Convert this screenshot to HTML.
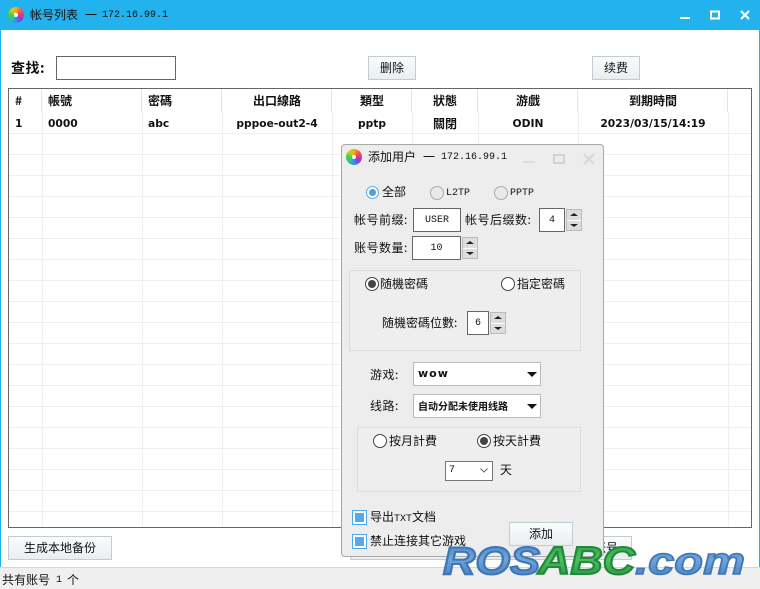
<!DOCTYPE html>
<html><head><meta charset="utf-8"><style>
*{box-sizing:border-box}
html,body{margin:0;padding:0}
body{width:760px;height:589px;position:relative;overflow:hidden;background:#fff;font-family:"Liberation Serif","Noto Sans CJK SC",sans-serif;font-size:12px;color:#111}
.a{position:absolute;white-space:nowrap}
.z{font-family:"WenQuanYi Zen Hei","Noto Sans CJK SC",sans-serif}
.b{font-family:"DejaVu Sans","WenQuanYi Zen Hei","Noto Sans CJK SC",sans-serif;font-weight:bold;font-size:10.700px;color:#111;text-align:center}
.h{font-family:"WenQuanYi Zen Hei","Noto Sans CJK SC",sans-serif;font-weight:bold;font-size:12px;color:#111;text-align:center}
.m{font-family:"Liberation Mono","WenQuanYi Zen Hei",monospace;font-size:10px}
.btn{position:absolute;border:1px solid #c3ccd5;background:linear-gradient(#fbfcfc,#e9eef1);text-align:center;font-family:"WenQuanYi Zen Hei","Noto Sans CJK SC",sans-serif;font-size:12px;color:#111}
.inp{position:absolute;border:1px solid #666;background:#fff;text-align:center;font-family:"Liberation Mono",monospace;font-size:10px;padding-top:1px}
.sp{position:absolute;width:16px;background:#ddd;border:1px solid #bbb}
.sp:before,.sp:after{content:"";position:absolute;left:3px;border-left:4px solid transparent;border-right:4px solid transparent}
.sp:before{top:3px;border-bottom:3px solid #222}
.sp:after{bottom:3px;border-top:3px solid #222}
.sp i{position:absolute;left:0;right:0;top:50%;height:1px;background:#fff}
.r{position:absolute;width:14px;height:14px;border-radius:50%;border:1px solid #444;background:#fff}
.r.on:after{content:"";position:absolute;left:2px;top:2px;width:8px;height:8px;border-radius:50%;background:#444}
.r.g{border:1px solid #aaa;background:#e9e9e9}
.grp{position:absolute;border:1px solid #dcdcdc;background:#eeeeee}
.sel{position:absolute;border:1px solid #bbb;background:#fff}
.sel:after{content:"";position:absolute;right:3px;top:9px;border-left:5px solid transparent;border-right:5px solid transparent;border-top:5px solid #111}
.cb{position:absolute;width:15px;height:15px;border:1px solid #4aa8ee;background:#fff}
.cb:after{content:"";position:absolute;left:2px;top:2px;width:9px;height:9px;background:#5aa9e6}
.ic{position:absolute;width:16px;height:16px;border-radius:50%;background:conic-gradient(#f0b020,#f06030,#e030a0,#8040e0,#3090f0,#30c0a0,#40d040,#c0d020,#f0b020)}
.ic:after{content:"";position:absolute;left:6px;top:6px;width:4px;height:4px;border-radius:50%;background:#fff}
</style></head><body>

<!-- window frame -->
<div class="a" style="left:0;top:0;width:760px;height:30px;background:#22b2ee"></div>
<div class="a" style="left:0;top:30px;width:1px;height:538px;background:#22b2ee"></div>
<div class="a" style="right:0;top:30px;width:1px;height:538px;background:#22b2ee"></div>
<div class="ic" style="left:8px;top:7px"></div>
<div class="a z" style="left:30px;top:7px;font-size:12px;line-height:16px;color:#111">帐号列表</div>
<div class="a z" style="left:85px;top:7px;font-size:12px;line-height:16px;color:#111">一</div>
<div class="a m" style="left:102px;top:8px;line-height:16px;color:#111">172.16.99.1</div>
<svg class="a" style="left:670px;top:0" width="90" height="30">
<rect x="10" y="17" width="10" height="2" fill="#fff"/>
<rect x="41" y="11.500" width="8" height="7" fill="none" stroke="#fff" stroke-width="2"/>
<path d="M71 11L79 19M79 11L71 19" stroke="#fff" stroke-width="2" fill="none"/>
</svg>

<!-- toolbar -->
<div class="a z" style="left:11px;top:60px;font-size:14px;font-weight:bold;line-height:16px;letter-spacing:.5px">查找:</div>
<div class="a" style="left:56px;top:56px;width:120px;height:24px;border:1px solid #666;background:#fff"></div>
<div class="btn" style="left:368px;top:56px;width:48px;height:24px;line-height:22px">删除</div>
<div class="btn" style="left:592px;top:56px;width:48px;height:24px;line-height:22px">续费</div>

<!-- grid -->
<div class="a" style="left:8px;top:88px;width:744px;height:440px;border:1px solid #666;background:#fff;overflow:hidden">
<svg style="position:absolute;left:-9px;top:-89px;width:760px;height:589px" width="760" height="589" viewBox="0 0 760 589">
<g stroke="#efefef" stroke-width="1" shape-rendering="crispEdges">
<path d="M8 133.500H752M8 154.500H752M8 175.500H752M8 196.500H752M8 217.500H752M8 238.500H752M8 259.500H752M8 280.500H752M8 301.500H752M8 322.500H752M8 343.500H752M8 364.500H752M8 385.500H752M8 406.500H752M8 427.500H752M8 448.500H752M8 469.500H752M8 490.500H752M8 511.500H752"/>
<path d="M42.500 112V527M142.500 112V527M222.500 112V527M332.500 112V527M412.500 112V527M478.500 112V527M578.500 112V527M728.500 112V527"/>
<path stroke="#e4e4e4" d="M41.500 89V112M141.500 89V112M221.500 89V112M331.500 89V112M411.500 89V112M477.500 89V112M577.500 89V112M727.500 89V112"/>
</g></svg>
</div>
<div class="a h" style="left:15px;top:93px;line-height:16px">#</div>
<div class="a h" style="left:48px;top:93px;line-height:16px">帳號</div>
<div class="a h" style="left:148px;top:93px;line-height:16px">密碼</div>
<div class="a h" style="left:222px;width:110px;top:93px;line-height:16px">出口線路</div>
<div class="a h" style="left:332px;width:80px;top:93px;line-height:16px">類型</div>
<div class="a h" style="left:412px;width:66px;top:93px;line-height:16px">狀態</div>
<div class="a h" style="left:478px;width:100px;top:93px;line-height:16px">游戲</div>
<div class="a h" style="left:578px;width:150px;top:93px;line-height:16px">到期時間</div>
<div class="a b" style="left:15px;top:116px;line-height:16px">1</div>
<div class="a b" style="left:48px;top:116px;line-height:16px">0000</div>
<div class="a b" style="left:148px;top:116px;line-height:16px">abc</div>
<div class="a b" style="left:222px;width:110px;top:116px;line-height:16px">pppoe-out2-4</div>
<div class="a b" style="left:332px;width:80px;top:116px;line-height:16px">pptp</div>
<div class="a h" style="left:412px;width:66px;top:116px;line-height:16px">關閉</div>
<div class="a b" style="left:478px;width:100px;top:116px;line-height:16px">ODIN</div>
<div class="a b" style="left:578px;width:150px;top:116px;line-height:16px">2023/03/15/14:19</div>

<!-- bottom -->
<div class="btn" style="left:8px;top:536px;width:104px;height:24px;line-height:22px">生成本地备份</div>
<div class="btn" style="left:350px;top:536px;width:282px;height:24px;line-height:22px;text-align:right;padding-right:13px">账号</div>
<div class="a" style="left:0;top:567px;width:760px;height:22px;background:#efefef;border-top:1px solid #d6d6d6"></div>
<div class="a z" style="left:2px;top:572px;line-height:15px;font-size:12px">共有账号</div>
<div class="a m" style="left:56px;top:573px;line-height:15px">1</div>
<div class="a z" style="left:67px;top:572px;line-height:15px;font-size:12px">个</div>

<!-- dialog -->
<div class="a" style="left:341px;top:144px;width:263px;height:413px;background:#ededed;border:1px solid #a8a8a8;border-radius:4px"></div>
<div class="ic" style="left:346px;top:149px"></div>
<div class="a z" style="left:368px;top:149px;line-height:16px;font-size:12px">添加用户</div>
<div class="a z" style="left:423px;top:149px;line-height:16px;font-size:12px">一</div>
<div class="a m" style="left:441px;top:150px;line-height:16px">172.16.99.1</div>
<svg class="a" style="left:520px;top:150px" width="80" height="18">
<rect x="3" y="11" width="12" height="2" fill="#dcdcdc"/>
<rect x="34" y="5" width="10" height="8" fill="none" stroke="#d2d2d2" stroke-width="2"/>
<path d="M64 4L74 14M74 4L64 14" stroke="#d8d8d8" stroke-width="2" fill="none"/>
</svg>

<div class="a" style="left:366px;top:186px;width:13px;height:13px;border-radius:50%;border:1px solid #5aa9e6;background:#fff"><div style="position:absolute;left:2px;top:2px;width:7px;height:7px;border-radius:50%;background:#4a9fe6"></div></div>
<div class="a z" style="left:382px;top:184px;line-height:15px">全部</div>
<div class="r g" style="left:430px;top:186px"></div>
<div class="a m" style="left:446px;top:187px;line-height:13px">L2TP</div>
<div class="r g" style="left:494px;top:186px"></div>
<div class="a m" style="left:510px;top:187px;line-height:13px">PPTP</div>

<div class="a z" style="left:354px;top:212px;line-height:15px;letter-spacing:.5px">帐号前缀:</div>
<div class="inp" style="left:413px;top:208px;width:48px;height:24px;line-height:22px">USER</div>
<div class="a z" style="left:465px;top:212px;line-height:15px;letter-spacing:.5px">帐号后缀数:</div>
<div class="inp" style="left:539px;top:208px;width:26px;height:24px;line-height:22px">4</div>
<div class="sp" style="left:566px;top:209px;height:22px"><i></i></div>
<div class="a z" style="left:354px;top:240px;line-height:15px;letter-spacing:.5px">账号数量:</div>
<div class="inp" style="left:412px;top:236px;width:49px;height:24px;line-height:22px">10</div>
<div class="sp" style="left:462px;top:237px;height:22px"><i></i></div>

<div class="grp" style="left:349px;top:270px;width:232px;height:81px"></div>
<div class="r on" style="left:365px;top:277px"></div>
<div class="a z" style="left:380px;top:276px;line-height:15px">随機密碼</div>
<div class="r" style="left:501px;top:277px"></div>
<div class="a z" style="left:517px;top:276px;line-height:15px">指定密碼</div>
<div class="a z" style="left:382px;top:315px;line-height:15px">随機密碼位數:</div>
<div class="inp" style="left:467px;top:311px;width:22px;height:24px;line-height:22px">6</div>
<div class="sp" style="left:490px;top:312px;height:22px"><i></i></div>

<div class="a z" style="left:370px;top:367px;line-height:15px;letter-spacing:.5px">游戏:</div>
<div class="sel" style="left:413px;top:362px;width:128px;height:24px"></div>
<div class="a" style="left:418px;top:367px;font:bold 11px/14px 'DejaVu Sans',sans-serif;letter-spacing:1px">wow</div>
<div class="a z" style="left:370px;top:398px;line-height:15px;letter-spacing:.5px">线路:</div>
<div class="sel" style="left:413px;top:394px;width:128px;height:24px"></div>
<div class="a z" style="left:418px;top:399px;font-size:10px;line-height:14px;font-weight:bold">自动分配未使用线路</div>

<div class="grp" style="left:357px;top:427px;width:224px;height:65px"></div>
<div class="r" style="left:373px;top:434px"></div>
<div class="a z" style="left:389px;top:433px;line-height:15px">按月計費</div>
<div class="r on" style="left:477px;top:434px"></div>
<div class="a z" style="left:493px;top:433px;line-height:15px">按天計費</div>
<div class="a" style="left:445px;top:461px;width:48px;height:20px;border:1px solid #777;background:#fff;font:10px/18px 'Liberation Mono',monospace;padding-left:3px">7</div>
<svg class="a" style="left:479px;top:467px" width="12" height="8"><path d="M1.500 1.500L5 5L8.500 1.500" fill="none" stroke="#666" stroke-width="1"/></svg>
<div class="a z" style="left:500px;top:462px;line-height:15px">天</div>

<div class="cb" style="left:352px;top:510px"></div>
<div class="a z" style="left:370px;top:509px;line-height:15px">导出<span class="m">TXT</span>文档</div>
<div class="cb" style="left:352px;top:534px"></div>
<div class="a z" style="left:370px;top:533px;line-height:15px">禁止连接其它游戏</div>
<div class="btn" style="left:509px;top:522px;width:64px;height:24px;line-height:22px">添加</div>

<!-- watermark -->
<svg class="a" style="left:430px;top:530px;overflow:visible" width="330" height="59">
<defs>
<linearGradient id="bl" x1="0" y1="0" x2="0" y2="1"><stop offset="0" stop-color="#4a82c4"/><stop offset=".45" stop-color="#6fa4dc"/><stop offset="1" stop-color="#3f76b4"/></linearGradient>
<linearGradient id="gr" x1="0" y1="0" x2="0" y2="1"><stop offset="0" stop-color="#2a9a48"/><stop offset=".45" stop-color="#4fc060"/><stop offset="1" stop-color="#1f8a3a"/></linearGradient>
</defs>
<text x="13" y="44" font-family="Liberation Sans" font-weight="bold" font-style="italic" font-size="39" textLength="97" lengthAdjust="spacingAndGlyphs" fill="url(#bl)" stroke="#3f76b4" stroke-width="2">ROS</text>
<text x="108" y="44" font-family="Liberation Sans" font-weight="bold" font-style="italic" font-size="39" textLength="97" lengthAdjust="spacingAndGlyphs" fill="url(#gr)" stroke="#1f8a3a" stroke-width="2">ABC</text>
<text x="205" y="44" font-family="Liberation Sans" font-weight="bold" font-style="italic" font-size="38" textLength="110" lengthAdjust="spacingAndGlyphs" fill="url(#bl)" stroke="#3f76b4" stroke-width="1.500">.com</text>
</svg>
</body></html>
